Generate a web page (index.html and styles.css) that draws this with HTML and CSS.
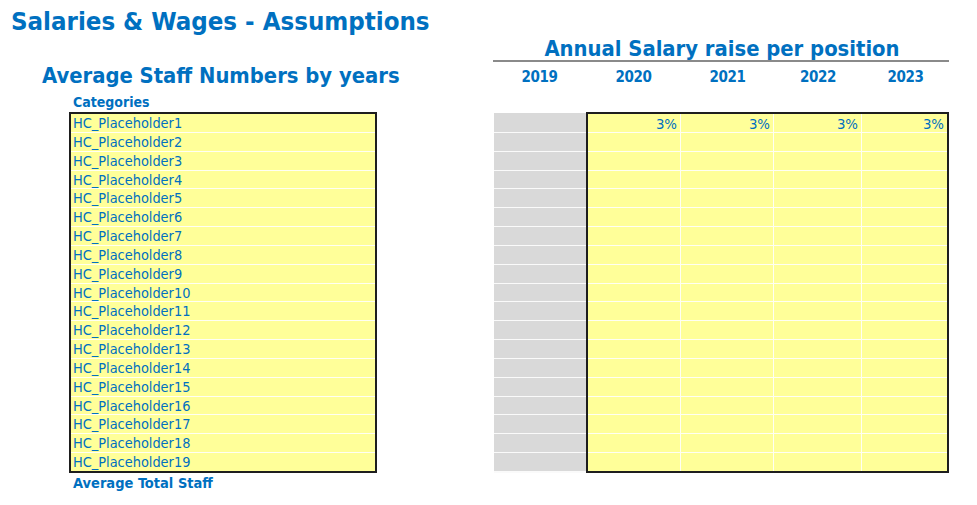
FILE: index.html
```html
<!DOCTYPE html>
<html lang="en">
<head>
<meta charset="utf-8">
<title>Salaries &amp; Wages - Assumptions</title>
<link rel="stylesheet" href="styles.css">
</head>
<body>
<h1 class="title">Salaries &amp; Wages - Assumptions</h1>
<div class="main">
  <section class="staff">
    <h2 class="subtitle staff-title">Average Staff Numbers by years</h2>
    <div class="label cat-label">Categories</div>
    <div class="cat-table rows19">
      <div class="cat-row">HC_Placeholder1</div>
      <div class="cat-row">HC_Placeholder2</div>
      <div class="cat-row">HC_Placeholder3</div>
      <div class="cat-row">HC_Placeholder4</div>
      <div class="cat-row">HC_Placeholder5</div>
      <div class="cat-row">HC_Placeholder6</div>
      <div class="cat-row">HC_Placeholder7</div>
      <div class="cat-row">HC_Placeholder8</div>
      <div class="cat-row">HC_Placeholder9</div>
      <div class="cat-row">HC_Placeholder10</div>
      <div class="cat-row">HC_Placeholder11</div>
      <div class="cat-row">HC_Placeholder12</div>
      <div class="cat-row">HC_Placeholder13</div>
      <div class="cat-row">HC_Placeholder14</div>
      <div class="cat-row">HC_Placeholder15</div>
      <div class="cat-row">HC_Placeholder16</div>
      <div class="cat-row">HC_Placeholder17</div>
      <div class="cat-row">HC_Placeholder18</div>
      <div class="cat-row">HC_Placeholder19</div>
    </div>
    <div class="label total-label">Average Total Staff</div>
  </section>
  <section class="raise">
    <h2 class="subtitle raise-title">Annual Salary raise per position</h2>
    <div class="years">
      <div class="year">2019</div>
      <div class="year">2020</div>
      <div class="year">2021</div>
      <div class="year">2022</div>
      <div class="year">2023</div>
    </div>
    <div class="raise-body">
      <div class="gray-col rows19">
        <div class="g"></div><div class="g"></div><div class="g"></div><div class="g"></div><div class="g"></div>
        <div class="g"></div><div class="g"></div><div class="g"></div><div class="g"></div><div class="g"></div>
        <div class="g"></div><div class="g"></div><div class="g"></div><div class="g"></div><div class="g"></div>
        <div class="g"></div><div class="g"></div><div class="g"></div><div class="g"></div>
      </div>
      <div class="raise-table rows19">
        <div class="c pct">3%</div><div class="c pct">3%</div><div class="c pct">3%</div><div class="c pct">3%</div>
        <div class="c"></div><div class="c"></div><div class="c"></div><div class="c"></div>
        <div class="c"></div><div class="c"></div><div class="c"></div><div class="c"></div>
        <div class="c"></div><div class="c"></div><div class="c"></div><div class="c"></div>
        <div class="c"></div><div class="c"></div><div class="c"></div><div class="c"></div>
        <div class="c"></div><div class="c"></div><div class="c"></div><div class="c"></div>
        <div class="c"></div><div class="c"></div><div class="c"></div><div class="c"></div>
        <div class="c"></div><div class="c"></div><div class="c"></div><div class="c"></div>
        <div class="c"></div><div class="c"></div><div class="c"></div><div class="c"></div>
        <div class="c"></div><div class="c"></div><div class="c"></div><div class="c"></div>
        <div class="c"></div><div class="c"></div><div class="c"></div><div class="c"></div>
        <div class="c"></div><div class="c"></div><div class="c"></div><div class="c"></div>
        <div class="c"></div><div class="c"></div><div class="c"></div><div class="c"></div>
        <div class="c"></div><div class="c"></div><div class="c"></div><div class="c"></div>
        <div class="c"></div><div class="c"></div><div class="c"></div><div class="c"></div>
        <div class="c"></div><div class="c"></div><div class="c"></div><div class="c"></div>
        <div class="c"></div><div class="c"></div><div class="c"></div><div class="c"></div>
        <div class="c"></div><div class="c"></div><div class="c"></div><div class="c"></div>
        <div class="c"></div><div class="c"></div><div class="c"></div><div class="c"></div>
      </div>
    </div>
  </section>
</div>
</body>
</html>
```
FILE: styles.css
```css
* { box-sizing: border-box; }

html, body {
  margin: 0;
  background: #ffffff;
}

body {
  width: 977px;
  height: 505px;
  overflow: hidden;
  font-family: "DejaVu Sans Condensed", "DejaVu Sans", sans-serif;
  color: #0070c0;
}

.title {
  margin: 0;
  padding: 6px 0 0 11px;
  font-size: 25.6px;
  line-height: 30px;
  font-weight: 700;
}

.main {
  display: flex;
  align-items: flex-start;
}

.staff {
  width: 377px;
  padding-left: 42px;
}

.subtitle {
  margin: 0;
  font-size: 21.8px;
  line-height: 22px;
  font-weight: 700;
  white-space: nowrap;
}

.staff-title {
  margin-top: 29px;
}

.label {
  font-weight: 700;
  font-size: 14px;
  line-height: 18px;
  margin-left: 31px;
  white-space: nowrap;
}

.cat-label {
  margin-top: 6px;
  margin-bottom: 1px;
}

/* 19 rows of integer height separated by 1px white lines */
.rows19 {
  display: grid;
  grid-template-rows: 18px 18px 18px 17px 18px 18px 18px 18px 18px 17px 18px 18px 18px 18px 18px 17px 18px 18px 18px;
  row-gap: 1px;
}

.cat-table {
  margin-left: 27px;
  width: 308px;
  height: 361px;
  border: 2px solid #1e1e1e;
  background: #fffff4;
}

.cat-row {
  background: #ffff99;
  font-size: 14.4px;
  line-height: 17px;
  padding: 1px 0 0 2px;
  white-space: nowrap;
  overflow: hidden;
}

.total-label {
  font-size: 14.5px;
  margin-top: 1px;
}

.raise {
  margin-left: 116px;
  width: 456px;
}

.raise-title {
  margin-top: 2px;
  text-align: center;
  padding-left: 2px;
  border-bottom: 2px solid #8a8a8a;
}

.years {
  display: grid;
  grid-template-columns: 93px 95px 93px 88px 87px;
  margin-top: 5px;
  height: 20px;
}

.year {
  font-weight: 700;
  font-size: 15px;
  letter-spacing: -0.4px;
  line-height: 20px;
  text-align: center;
}

.raise-body {
  margin-top: 25px;
  display: flex;
}

.gray-col {
  width: 93px;
  height: 360px;
  margin: 1px -1px 0 1px;
  border-top: 1px solid #d9d9d9;
  background: #fafafa;
}

.g {
  background: #d9d9d9;
}

.raise-table {
  width: 363px;
  height: 361px;
  border: 2px solid #1e1e1e;
  background: #fffff4;
  grid-template-columns: 92px 92px 87px 85px;
  column-gap: 1px;
}

.c {
  background: #ffff99;
}

.pct {
  font-size: 14.8px;
  line-height: 17px;
  padding: 1px 3px 0 0;
  text-align: right;
}
```
